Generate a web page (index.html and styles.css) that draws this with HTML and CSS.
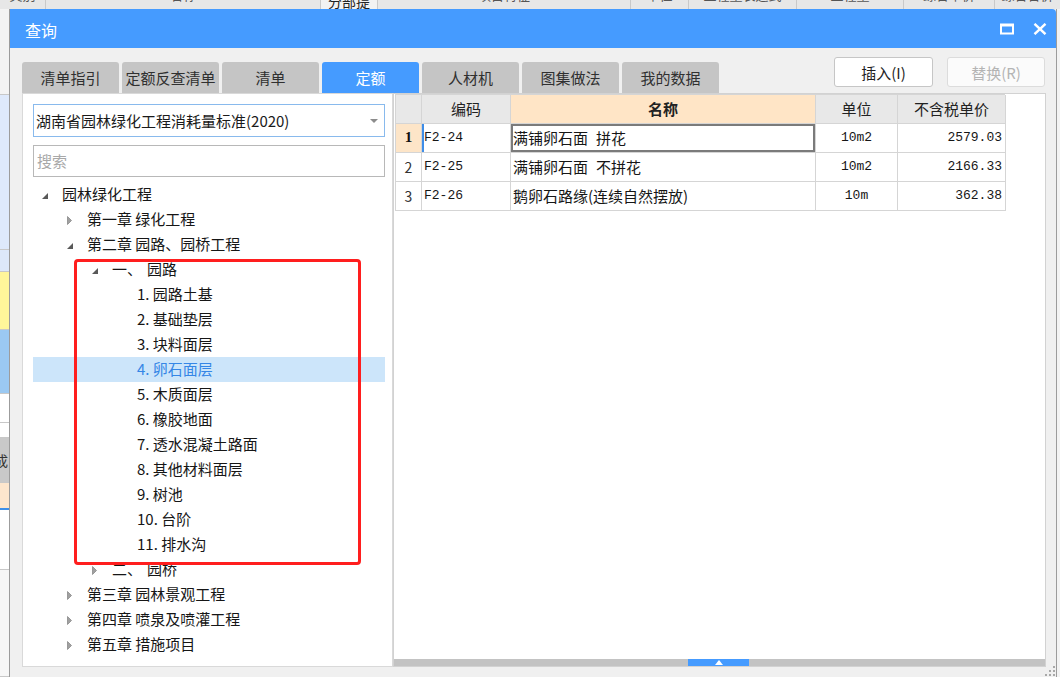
FILE: index.html
```html
<!DOCTYPE html>
<html lang="zh-CN">
<head>
<meta charset="utf-8">
<title>查询</title>
<link rel="stylesheet" href="styles.css">
</head>
<body>
<div class="app">
  <div class="bg-head">
    <div class="bh c1"><span>类别</span></div>
    <div class="bh c2"><span>名称</span></div>
    <div class="bh c3"><span class="hi">分部提</span></div>
    <div class="bh c4"><span>项目特征</span></div>
    <div class="bh c5"><span>单位</span></div>
    <div class="bh c6"><span>工程量表达式</span></div>
    <div class="bh c7"><span>工程量</span></div>
    <div class="bh c8"><span>综合单价</span></div>
    <div class="bh c9"><span>综合合价</span></div>
  </div>
  <div class="bg-body">
    <div class="bg-left">
      <div class="s s-a"></div>
      <div class="s s-b"></div>
      <div class="s s-c"></div>
      <div class="s s-d"></div>
      <div class="s s-e"></div>
      <div class="s s-f"></div>
      <div class="s s-g"></div>
      <div class="s s-h"><span>成</span></div>
      <div class="s s-i"></div>
      <div class="s s-j"></div>
      <div class="s s-k"></div>
    </div>
    <div class="bg-mid"></div>
    <div class="bg-right"></div>
  </div>
</div>

<div class="dialog">
  <div class="titlebar">
    <span class="title">查询</span>
    <div class="winbtns">
      <svg class="wb-max" width="14" height="12" viewBox="0 0 14 12"><rect x="1" y="1.5" width="12" height="9" fill="none" stroke="#fff" stroke-width="2"/><rect x="1" y="1" width="12" height="2.5" fill="#fff"/></svg>
      <svg class="wb-close" width="14" height="12" viewBox="0 0 14 12"><path d="M1.5 0.8L12.5 11.2M12.5 0.8L1.5 11.2" stroke="#fff" stroke-width="2.4" fill="none"/></svg>
    </div>
  </div>
  <div class="body">
    <div class="toolbar">
      <div class="tabs">
        <div class="tab">清单指引</div>
        <div class="tab">定额反查清单</div>
        <div class="tab">清单</div>
        <div class="tab active">定额</div>
        <div class="tab">人材机</div>
        <div class="tab">图集做法</div>
        <div class="tab">我的数据</div>
      </div>
      <div class="actions">
        <button class="btn">插入(I)</button>
        <button class="btn disabled">替换(R)</button>
      </div>
    </div>
    <div class="panes">
      <div class="left-pane">
        <div class="select">
          <span>湖南省园林绿化工程消耗量标准(2020)</span>
          <svg class="caret" width="8" height="4" viewBox="0 0 8 4"><path d="M0 0H8L4 4Z" fill="#8c8c8c"/></svg>
        </div>
        <div class="search">搜索</div>
        <div class="tree">
          <div class="row l0"><span class="arw"><svg width="6" height="6" viewBox="0 0 6 6"><path d="M6 0V6H0Z" fill="#595959"/></svg></span>园林绿化工程</div>
          <div class="row l1"><span class="arw"><svg width="5" height="9" viewBox="0 0 5 9"><path d="M0.5 0.5L4.5 4.5L0.5 8.5Z" fill="#a0a0a0" stroke="#8a8a8a" stroke-width="0.8"/></svg></span>第一章 绿化工程</div>
          <div class="row l1"><span class="arw"><svg width="6" height="6" viewBox="0 0 6 6"><path d="M6 0V6H0Z" fill="#595959"/></svg></span>第二章 园路、园桥工程</div>
          <div class="row l2"><span class="arw"><svg width="6" height="6" viewBox="0 0 6 6"><path d="M6 0V6H0Z" fill="#595959"/></svg></span>一、<span class="gap"></span>园路</div>
          <div class="row l3">1. 园路土基</div>
          <div class="row l3">2. 基础垫层</div>
          <div class="row l3">3. 块料面层</div>
          <div class="row l3 sel">4. 卵石面层</div>
          <div class="row l3">5. 木质面层</div>
          <div class="row l3">6. 橡胶地面</div>
          <div class="row l3">7. 透水混凝土路面</div>
          <div class="row l3">8. 其他材料面层</div>
          <div class="row l3">9. 树池</div>
          <div class="row l3">10. 台阶</div>
          <div class="row l3">11. 排水沟</div>
          <div class="row l2"><span class="arw"><svg width="5" height="9" viewBox="0 0 5 9"><path d="M0.5 0.5L4.5 4.5L0.5 8.5Z" fill="#a0a0a0" stroke="#8a8a8a" stroke-width="0.8"/></svg></span>二、<span class="gap"></span>园桥</div>
          <div class="row l1"><span class="arw"><svg width="5" height="9" viewBox="0 0 5 9"><path d="M0.5 0.5L4.5 4.5L0.5 8.5Z" fill="#a0a0a0" stroke="#8a8a8a" stroke-width="0.8"/></svg></span>第三章 园林景观工程</div>
          <div class="row l1"><span class="arw"><svg width="5" height="9" viewBox="0 0 5 9"><path d="M0.5 0.5L4.5 4.5L0.5 8.5Z" fill="#a0a0a0" stroke="#8a8a8a" stroke-width="0.8"/></svg></span>第四章 喷泉及喷灌工程</div>
          <div class="row l1"><span class="arw"><svg width="5" height="9" viewBox="0 0 5 9"><path d="M0.5 0.5L4.5 4.5L0.5 8.5Z" fill="#a0a0a0" stroke="#8a8a8a" stroke-width="0.8"/></svg></span>第五章 措施项目</div>
        </div>
        <div class="redbox"></div>
      </div>
      <div class="right-pane">
        <div class="grid-area">
          <div class="grid">
            <div class="hd rn"></div><div class="hd">编码</div><div class="hd sorted">名称</div><div class="hd">单位</div><div class="hd">不含税单价</div>

            <div class="cell rn cur">1</div><div class="cell code curcode">F2-24</div><div class="cell name selcell">满铺卵石面<span class="sp"></span>拼花</div><div class="cell unit">10m2</div><div class="cell price">2579.03</div>

            <div class="cell rn">2</div><div class="cell code">F2-25</div><div class="cell name">满铺卵石面<span class="sp"></span>不拼花</div><div class="cell unit">10m2</div><div class="cell price">2166.33</div>

            <div class="cell rn">3</div><div class="cell code">F2-26</div><div class="cell name">鹅卵石路缘(连续自然摆放)</div><div class="cell unit">10m</div><div class="cell price">362.38</div>
          </div>
        </div>
        <div class="hscroll"><div class="handle"><svg width="8" height="5" viewBox="0 0 8 5"><path d="M0 5L4 0L8 5Z" fill="#fff"/></svg></div></div>
      </div>
    </div>
  </div>
  <div class="grip">
    <svg width="10" height="10" viewBox="0 0 10 10" fill="#a8a8a8"><rect x="8" y="0" width="2" height="2"/><rect x="4" y="4" width="2" height="2"/><rect x="8" y="4" width="2" height="2"/><rect x="0" y="8" width="2" height="2"/><rect x="4" y="8" width="2" height="2"/><rect x="8" y="8" width="2" height="2"/></svg>
  </div>
</div>
</body>
</html>
```

FILE: styles.css
```css
* { box-sizing: border-box; }
html, body { margin: 0; padding: 0; }
body {
  width: 1060px;
  height: 677px;
  overflow: hidden;
  position: relative;
  background: #ffffff;
  font-family: "Noto Sans CJK SC", "Microsoft YaHei", sans-serif;
  font-size: 15px;
  color: #161616;
}

/* ---------- background application ---------- */
.app { height: 677px; display: flex; flex-direction: column; }
.bg-head { height: 9px; display: flex; background: #e7e7e7; overflow: hidden; }
.bh { border-right: 1px solid #c9c9c9; overflow: hidden; text-align: center; }
.bh span { display: block; margin-top: -13px; line-height: 16px; font-size: 13px; color: #555; }
.bh span.hi { margin-top: -7px; font-size: 14px; color: #222; }
.c1 { width: 46px; }
.c2 { width: 275px; }
.c3 { width: 57px; background: #f2f2f2; }
.c4 { width: 253px; }
.c5 { width: 58px; }
.c6 { width: 108px; }
.c7 { width: 107px; }
.c8 { width: 91px; }
.c9 { flex: 1; border-right: 0; }
.bg-body { flex: 1; display: flex; }
.bg-left { width: 9px; display: flex; flex-direction: column; }
.s { border-bottom: 1px solid #c8c8c8; }
.s-a { height: 86px; background: #f4f4f4; }
.s-b { height: 155px; background: #dee9fb; }
.s-c { height: 22px; background: #dde8fa; }
.s-d { height: 58px; background: #fff69a; }
.s-e { height: 64px; background: #9bc9f2; }
.s-f { height: 29px; background: #ffffff; }
.s-g { height: 15px; background: #ffffff; }
.s-h { height: 45px; background: #c9c9c9; overflow: hidden; font-size: 14px; line-height: 45px; color: #333; }
.s-h span { display: block; margin-left: -6px; }
.s-i { height: 27px; background: #fde6cd; border-bottom: 2px solid #3d8fe8; }
.s-j { height: 60px; background: #ffffff; }
.s-k { flex: 1; background: #f7f7f7; }
.bg-mid { flex: 1; }
.bg-right { width: 4px; background: #f3f3f3; }

/* ---------- dialog ---------- */
.dialog {
  position: absolute;
  left: 9px;
  top: 9px;
  width: 1048px;
  height: 668px;
  border-left: 1px solid #9c9c9c;
  border-right: 1px solid #9c9c9c;
  background: #f0f0f0;
  display: flex;
  flex-direction: column;
}
.titlebar {
  height: 39px;
  background: #459bff;
  border-radius: 0 4px 0 0;
  display: flex;
  align-items: center;
  justify-content: space-between;
  padding: 3px 0 0 15px;
}
.title { color: #fff; font-size: 16px; line-height: 20px; }
.winbtns { display: flex; align-items: center; gap: 19px; padding-right: 9px; margin-top: -3px; }
.winbtns svg { display: block; }

.body { flex: 1; display: flex; flex-direction: column; padding: 0 10px 10px 12px; }
.toolbar { height: 45px; display: flex; justify-content: space-between; }
.tabs { display: flex; gap: 3px; align-self: flex-end; }
.tab {
  width: 97px;
  height: 31px;
  background: #c5c5c5;
  border-radius: 3px 3px 0 0;
  color: #303030;
  font-size: 15px;
  line-height: 31px;
  text-align: center;
}
.tab.active { background: #459bff; color: #fff; }
.actions { display: flex; gap: 14px; padding-top: 9px; padding-right: 1px; }
.btn {
  width: 99px;
  height: 30px;
  background: #ffffff;
  border: 1px solid #c6c6c6;
  border-radius: 3px;
  font-family: inherit;
  font-size: 15px;
  color: #1e1e1e;
  padding: 0;
}
.btn.disabled { width: 98px; color: #b4b4b4; border-color: #dcdcdc; background: #fbfbfb; }

.panes { flex: 1; display: flex; }
.left-pane {
  position: relative;
  width: 371px;
  background: #fff;
  border: 1px solid #d9d9d9;
  padding: 10px 7px 0 10px;
}
.select {
  height: 33px;
  border: 1px solid #89baed;
  display: flex;
  align-items: center;
  justify-content: space-between;
  padding: 0 6px 0 2px;
  font-size: 15px;
  color: #1a1a1a;
}
.caret { display: block; }
.search {
  margin-top: 8px;
  height: 32px;
  border: 1px solid #b8b8b8;
  padding-left: 3px;
  line-height: 30px;
  color: #a8a8a8;
  font-size: 15px;
}
.tree { margin-top: 5px; }
.row {
  height: 25px;
  display: flex;
  align-items: center;
  font-size: 15px;
  line-height: 22px;
  padding-bottom: 1px;
  color: #161616;
  white-space: nowrap;
}
.arw { width: 20px; display: flex; align-items: center; padding-top: 3px; }
.arw svg { display: block; }
.l0 { padding-left: 9px; }
.l1 { padding-left: 34px; }
.l2 { padding-left: 59px; }
.l3 { padding-left: 104px; }
.gap { display: inline-block; width: 5px; }
.row.sel { background: #cce5fa; color: #3586e6; }

.redbox {
  position: absolute;
  left: 51px;
  top: 165px;
  width: 287px;
  height: 306px;
  border: 3px solid #ff1e1e;
  border-radius: 4px;
  pointer-events: none;
}

.right-pane {
  flex: 1;
  background: #fff;
  border: 1px solid #d2d2d2;
  display: flex;
  flex-direction: column;
}
.grid-area { flex: 1; padding: 0 0 0 1px; }
.grid {
  display: grid;
  grid-template-columns: 26px 89px 305px 82px 108px;
  grid-auto-rows: 29px;
  width: 610px;
  border-left: 1px solid #d5d5d5;
  border-top: 1px solid #d5d5d5;
}
.hd, .cell {
  border-right: 1px solid #d5d5d5;
  border-bottom: 1px solid #d5d5d5;
  white-space: nowrap;
  overflow: hidden;
  display: flex;
  align-items: center;
  padding: 0 2px 1px;
}
.hd {
  background: #e8e8e8;
  font-size: 15px;
  color: #222;
  justify-content: center;
}
.hd.sorted { background: #ffe5c6; font-weight: bold; }
.cell { font-size: 15px; color: #161616; }
.cell.rn { justify-content: center; font-size: 14px; color: #333; padding: 0 0 1px; }
.cell.rn.cur { background: #fde5c8; font-family: "Liberation Serif", serif; font-weight: bold; font-size: 15px; color: #111; }
.cell.code, .cell.unit, .cell.price { font-family: "Liberation Mono", monospace; font-size: 13px; }
.cell.unit { justify-content: center; }
.cell.price { justify-content: flex-end; padding-right: 3px; }
.cell.curcode { box-shadow: inset 2px 0 0 #3e8de8; }
.cell.selcell { box-shadow: inset 0 0 0 2px #7b7b7b; }
.sp { display: inline-block; width: 8px; }

.hscroll { height: 7px; background: #c3c3c3; display: flex; }
.handle {
  margin-left: 294px;
  width: 61px;
  height: 7px;
  background: #459bff;
  display: flex;
  align-items: center;
  justify-content: center;
}
.handle svg { display: block; }

.grip { position: absolute; right: 1px; bottom: 1px; }
.grip svg { display: block; }
```
